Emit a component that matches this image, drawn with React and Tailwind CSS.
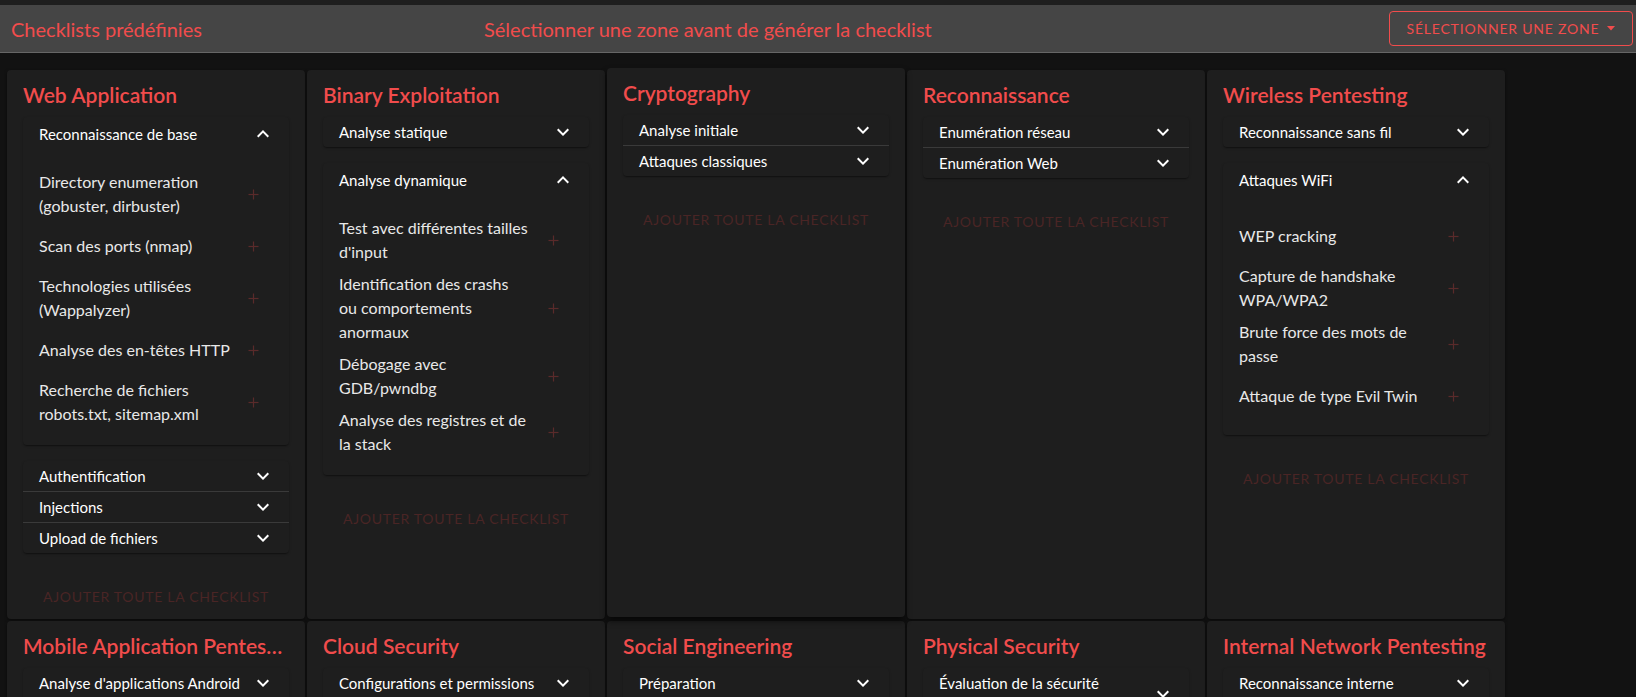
import React from 'react';

const cards = [
  {
    title: 'Web Application',
    sections: [
      {
        name: 'Reconnaissance de base',
        open: true,
        items: [
          'Directory enumeration (gobuster, dirbuster)',
          'Scan des ports (nmap)',
          'Technologies utilisées (Wappalyzer)',
          'Analyse des en-têtes HTTP',
          'Recherche de fichiers robots.txt, sitemap.xml',
        ],
      },
      { name: 'Authentification' },
      { name: 'Injections' },
      { name: 'Upload de fichiers' },
    ],
  },
  {
    title: 'Binary Exploitation',
    sections: [
      { name: 'Analyse statique' },
      {
        name: 'Analyse dynamique',
        open: true,
        items: [
          "Test avec différentes tailles d'input",
          'Identification des crashs\nou comportements anormaux',
          'Débogage avec GDB/pwndbg',
          'Analyse des registres et de la stack',
        ],
      },
    ],
  },
  {
    title: 'Cryptography',
    hover: true,
    sections: [{ name: 'Analyse initiale' }, { name: 'Attaques classiques' }],
  },
  {
    title: 'Reconnaissance',
    sections: [{ name: 'Enumération réseau' }, { name: 'Enumération Web' }],
  },
  {
    title: 'Wireless Pentesting',
    sections: [
      { name: 'Reconnaissance sans fil' },
      {
        name: 'Attaques WiFi',
        open: true,
        items: [
          'WEP cracking',
          'Capture de handshake WPA/WPA2',
          'Brute force des mots de passe',
          'Attaque de type Evil Twin',
        ],
      },
    ],
  },
  {
    title: 'Mobile Application Pentesting',
    sections: [
      { name: "Analyse d'applications Android" },
      { name: "Analyse d'applications iOS" },
      { name: 'Tests des API mobiles' },
    ],
  },
  {
    title: 'Cloud Security',
    sections: [
      { name: 'Configurations et permissions' },
      { name: 'Stockage et données' },
      { name: 'Services exposés' },
    ],
  },
  {
    title: 'Social Engineering',
    sections: [{ name: 'Préparation' }, { name: 'Phishing' }, { name: 'Vishing' }],
  },
  {
    title: 'Physical Security',
    sections: [
      { name: 'Évaluation de la sécurité physique' },
      { name: "Tests d'intrusion physique" },
    ],
  },
  {
    title: 'Internal Network Pentesting',
    sections: [
      { name: 'Reconnaissance interne' },
      { name: 'Mouvement latéral' },
      { name: 'Élévation de privilèges' },
    ],
  },
];

const paperShadow =
  'shadow-[0_2px_1px_-1px_rgba(0,0,0,0.2),0_1px_1px_0_rgba(0,0,0,0.14),0_1px_3px_0_rgba(0,0,0,0.12)]';

function Chevron({ up }) {
  return (
    <svg viewBox="0 0 24 24" className={`w-6 h-6 shrink-0 fill-white ${up ? 'rotate-180' : ''}`}>
      <path d="M16.59 8.59 12 13.17 7.41 8.59 6 10l6 6 6-6z" />
    </svg>
  );
}

function Plus() {
  return (
    <svg viewBox="0 0 12 12" className="w-[11px] h-[11px]" stroke="#5a2a2a" strokeWidth="1.3">
      <line x1="6" y1="0.5" x2="6" y2="11.5" />
      <line x1="0.5" y1="6" x2="11.5" y2="6" />
    </svg>
  );
}

// consecutive collapsed sections are drawn as one paper with dividers
function groupSections(sections) {
  const groups = [];
  sections.forEach((s) => {
    const last = groups[groups.length - 1];
    if (!s.open && last && !last.open) last.list.push(s);
    else groups.push({ open: !!s.open, list: [s] });
  });
  return groups;
}

function OpenSection({ section }) {
  return (
    <div className={`bg-[#1e1e1e] rounded-[4px] ${paperShadow}`}>
      <div className="flex items-center pl-4 pr-[14px] min-h-[34px]">
        <span className="flex-1 py-[6px] text-[15px] leading-[22px] text-white">{section.name}</span>
        <Chevron up />
      </div>
      <ul className="pt-[15px] pb-[15px] pl-4">
        {section.items.map((it) => (
          <li key={it} className="flex items-center min-h-[48px] py-1">
            <span className="w-[194px] whitespace-pre-line text-[16px] leading-6 text-[#e8e8e8]">{it}</span>
            <span className="w-10 flex justify-center">
              <Plus />
            </span>
          </li>
        ))}
      </ul>
    </div>
  );
}

function ClosedGroup({ list }) {
  return (
    <div className={`bg-[#1e1e1e] rounded-[4px] ${paperShadow}`}>
      {list.map((s, i) => (
        <div
          key={s.name}
          className={`flex items-center pl-4 pr-[14px] min-h-[30px] ${i > 0 ? 'border-t border-[#3a3a3a]' : ''}`}
        >
          <span className="flex-1 py-1 text-[15px] leading-[22px] text-white">{s.name}</span>
          <Chevron />
        </div>
      ))}
    </div>
  );
}

function Card({ card }) {
  const groups = groupSections(card.sections);
  return (
    <div
      className={`bg-[#1e1e1e] rounded-[4px] pt-[9px] px-4 pb-[5px] flex flex-col ${
        card.hover
          ? '-translate-y-[2px] shadow-[0_4px_6px_rgba(0,0,0,0.6)]'
          : 'shadow-[0_1px_3px_rgba(0,0,0,0.5)]'
      }`}
    >
      <h2 className="text-[21px] leading-8 font-semibold text-[#f14c4c] truncate mb-[6px]">{card.title}</h2>
      <div className="flex flex-col gap-4">
        {groups.map((g, i) =>
          g.open ? <OpenSection key={i} section={g.list[0]} /> : <ClosedGroup key={i} list={g.list} />
        )}
      </div>
      <button className="mt-[25px] h-9 flex items-center justify-center text-[14px] font-normal uppercase tracking-[0.7px] text-[#4a2525]">
        Ajouter toute la checklist
      </button>
    </div>
  );
}

export default function App() {
  return (
    <div className="h-screen overflow-hidden bg-[#121212] font-['Lato','Noto_Sans',sans-serif]">
      <div className="h-[5px] bg-[#1e1e1e]" />
      <header className="h-[48px] flex items-center bg-[#454545] border-b border-[#666666] pl-[11px] pr-[3px]">
        <span className="w-[473px] text-[20px] text-[#f14c4c]">Checklists prédéfinies</span>
        <span className="text-[20px] text-[#f14c4c]">Sélectionner une zone avant de générer la checklist</span>
        <button className="ml-auto h-[35px] w-[244px] flex items-center justify-center gap-2 border border-[#f14c4c] rounded-[4px] text-[14px] font-normal uppercase tracking-[0.8px] text-[#f14c4c]">
          Sélectionner une zone
          <svg viewBox="0 0 8 5" className="w-2 h-[5px] fill-[#f14c4c]">
            <polygon points="0,0 8,0 4,4.5" />
          </svg>
        </button>
      </header>
      <main className="grid grid-cols-[repeat(5,298px)] gap-[2px] pl-[7px] pt-[17px]">
        {cards.map((c) => (
          <Card key={c.title} card={c} />
        ))}
      </main>
    </div>
  );
}
